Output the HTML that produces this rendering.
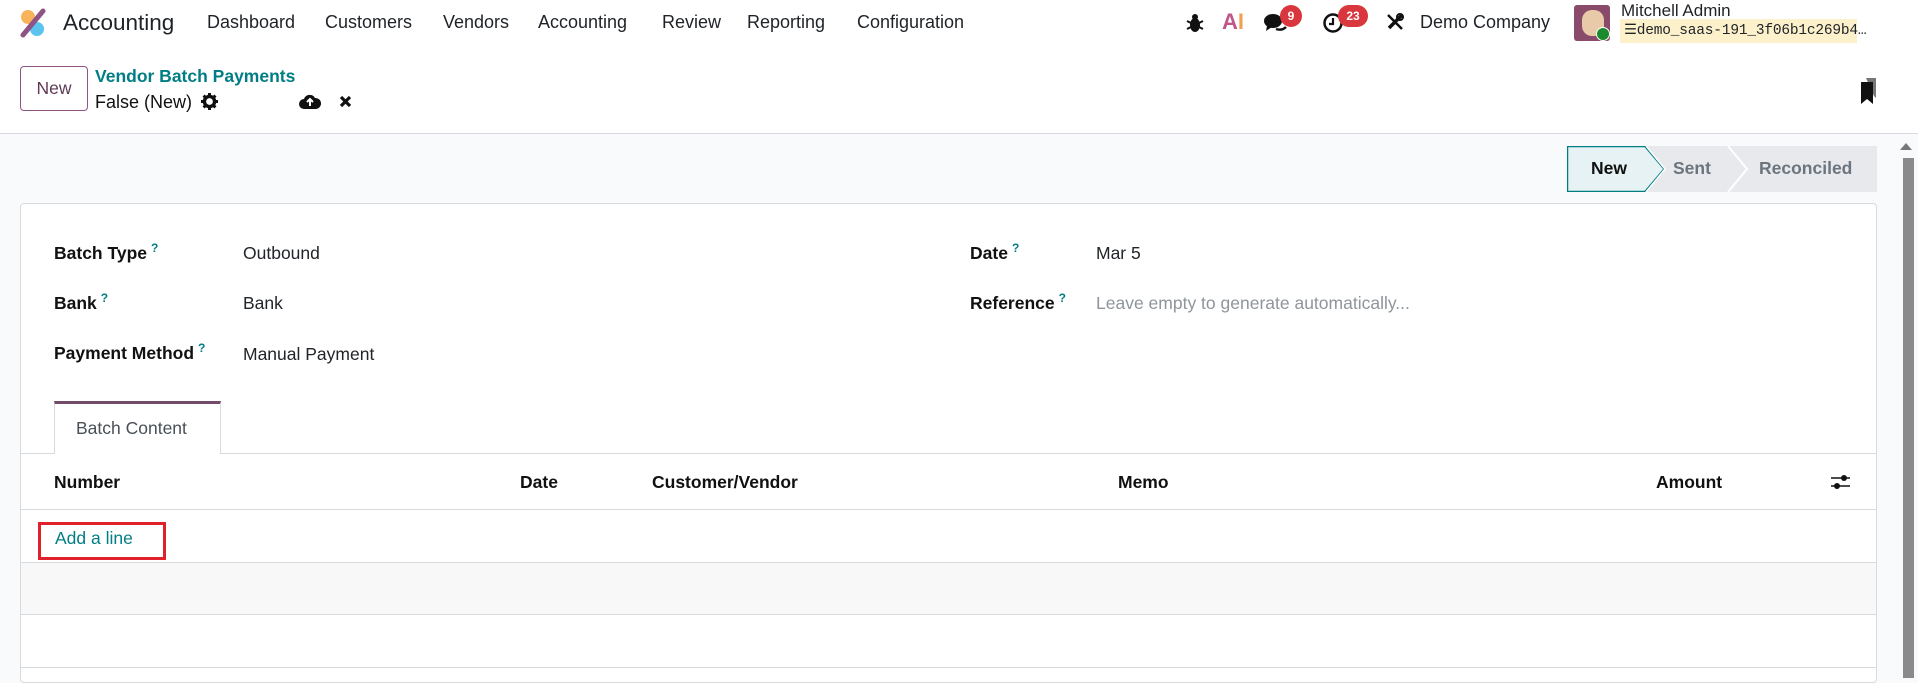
<!DOCTYPE html>
<html><head><meta charset="utf-8"><style>
*{box-sizing:border-box;margin:0;padding:0}
body{width:1918px;height:670px;overflow:hidden;font-family:"Liberation Sans",sans-serif;font-size:17.5px;color:#212529;background:#f9fafb;position:relative}
.a{position:absolute;white-space:nowrap}
.top{position:absolute;left:0;top:0;width:1918px;height:134px;background:#fff;border-bottom:1px solid #d8dadd}
.nav{font-size:18px;color:#1f2328;top:12px}
.lbl{font-weight:bold;color:#111}
.lbl sup{color:#017e84;font-size:12px;font-weight:bold;margin-left:4px}
.th{font-weight:bold;color:#111;top:472px}
.hl{position:absolute;left:20px;width:1857px;height:1px;background:#d8dadd}
</style></head><body>
<div class="top"></div>
<svg class="a" style="left:19px;top:8px" width="28" height="30" viewBox="0 0 28 30"><circle cx="9" cy="9" r="7" fill="#f9b45b"/><circle cx="18" cy="21" r="7" fill="#5bc4ee"/><line x1="4" y1="27" x2="24" y2="3" stroke="#8f5486" stroke-width="5" stroke-linecap="round"/></svg>
<div class="a" style="left:63px;top:10px;font-size:22.5px;color:#1f2328">Accounting</div>
<div class="a nav" style="left:207px">Dashboard</div>
<div class="a nav" style="left:325px">Customers</div>
<div class="a nav" style="left:443px">Vendors</div>
<div class="a nav" style="left:538px">Accounting</div>
<div class="a nav" style="left:662px">Review</div>
<div class="a nav" style="left:747px">Reporting</div>
<div class="a nav" style="left:857px">Configuration</div>
<svg class="a" style="left:1186px;top:13px" width="18" height="20" viewBox="0 0 18 20"><ellipse cx="9" cy="12" rx="5" ry="7" fill="#111"/><line x1="1" y1="8" x2="17" y2="16" stroke="#111" stroke-width="2"/><line x1="17" y1="8" x2="1" y2="16" stroke="#111" stroke-width="2"/><circle cx="9" cy="4" r="3" fill="#111"/></svg>
<div class="a" style="left:1222px;top:9px;font-size:22px;font-weight:bold;color:#c0568a">A<span style="color:#f0a050">I</span></div>
<svg class="a" style="left:1264px;top:12px" width="24" height="22" viewBox="0 0 24 22"><ellipse cx="9" cy="9" rx="9" ry="7" fill="#111"/><path d="M3 14 L2 19 L8 15Z" fill="#111"/><path d="M12 17 q6 2 10 -2" stroke="#111" stroke-width="2.5" fill="none"/></svg>
<div class="a" style="left:1280px;top:5px;width:22px;height:22px;border-radius:11px;background:#d9363e;color:#fff;font-size:12px;font-weight:bold;text-align:center;line-height:22px">9</div>
<svg class="a" style="left:1322px;top:12px" width="22" height="22" viewBox="0 0 22 22"><circle cx="11" cy="11" r="8.5" fill="none" stroke="#111" stroke-width="2.5"/><path d="M11 6v6h-4" stroke="#111" stroke-width="2.2" fill="none"/></svg>
<div class="a" style="left:1338px;top:5px;width:30px;height:22px;border-radius:11px;background:#d9363e;color:#fff;font-size:12px;font-weight:bold;text-align:center;line-height:22px">23</div>
<svg class="a" style="left:1385px;top:12px" width="20" height="20" viewBox="0 0 20 20"><path d="M3 3 L17 17" stroke="#111" stroke-width="2.5"/><path d="M17 3 L4 16" stroke="#111" stroke-width="3.5"/><circle cx="15" cy="5" r="3" fill="none" stroke="#111" stroke-width="2"/></svg>
<div class="a" style="left:1420px;top:12px;font-size:18px;color:#1f2328">Demo Company</div>
<div class="a" style="left:1574px;top:5px;width:36px;height:36px;background:#8a4a6a;border-radius:3px"></div>
<div class="a" style="left:1582px;top:10px;width:22px;height:26px;background:#e8c9a8;border-radius:10px"></div>
<div class="a" style="left:1596px;top:27px;width:14px;height:14px;border-radius:7px;background:#1b8a2c;border:1.5px solid #fff"></div>
<div class="a" style="left:1621px;top:1px;font-size:17px;color:#1f2328">Mitchell Admin</div>
<div class="a" style="left:1620px;top:19px;width:237px;height:24px;background:#fdf1cc"></div>
<div class="a" style="left:1624px;top:22px;font-family:'Liberation Mono',monospace;font-size:14.5px;color:#1f2328;letter-spacing:-0.2px">&#9776;demo_saas-191_3f06b1c269b4…</div>
<div class="a" style="left:20px;top:66px;width:68px;height:45px;border:1px solid #8f5486;border-radius:4px;text-align:center;line-height:43px;color:#5d3a56;font-size:17.5px">New</div>
<div class="a" style="left:95px;top:66px;font-weight:bold;color:#017e84;font-size:17.5px">Vendor Batch Payments</div>
<div class="a" style="left:95px;top:92px;font-size:18px;color:#111">False (New)</div>
<svg class="a" style="left:201px;top:93px" width="17" height="17" viewBox="0 0 20 20"><circle cx="10" cy="10" r="6" fill="none" stroke="#111" stroke-width="4"/><path d="M10 0v5M10 15v5M0 10h5M15 10h5M3 3l4 4M13 13l4 4M17 3l-4 4M3 17l4-4" stroke="#111" stroke-width="3.5"/></svg>
<svg class="a" style="left:299px;top:93px" width="22" height="16" viewBox="0 0 22 16"><path d="M5 16 a5 5 0 0 1 0-10 a6 6 0 0 1 11-1 a5 5 0 0 1 1 11Z" fill="#111"/><path d="M11 13V7M8 9l3-3 3 3" stroke="#fff" stroke-width="2" fill="none"/></svg>
<svg class="a" style="left:339px;top:95px" width="13" height="13" viewBox="0 0 13 13"><path d="M2 2L11 11M11 2L2 11" stroke="#111" stroke-width="3.2"/></svg>
<svg class="a" style="left:1860px;top:78px" width="18" height="26" viewBox="0 0 18 26"><path d="M6 0h10v20l-2-2" fill="#777"/><path d="M1 4h12v22l-6-5-6 5Z" fill="#111"/></svg>
<svg class="a" style="left:1567px;top:146px" width="310" height="46" viewBox="0 0 310 46"><rect x="0" y="0" width="310" height="46" fill="#e7e9ed"/><path d="M0.5 0.5H78L97 23L78 45.5H0.5Z" fill="#e6f2f3" stroke="#017e84" stroke-width="1.5"/><path d="M79 0L98 23L79 46" fill="none" stroke="#fff" stroke-width="1.5"/><path d="M161 0L180 23L161 46" fill="none" stroke="#fff" stroke-width="2"/></svg>
<div class="a" style="left:1591px;top:158px;font-weight:bold;color:#111">New</div>
<div class="a" style="left:1673px;top:158px;font-weight:bold;color:#6c757d">Sent</div>
<div class="a" style="left:1759px;top:158px;font-weight:bold;color:#6c757d">Reconciled</div>
<div class="a" style="left:20px;top:203px;width:1857px;height:480px;background:#fff;border:1px solid #d8dadd;border-radius:4px"></div>
<div class="a lbl" style="left:54px;top:241px">Batch Type<sup>?</sup></div>
<div class="a" style="left:243px;top:243px">Outbound</div>
<div class="a lbl" style="left:54px;top:291px">Bank<sup>?</sup></div>
<div class="a" style="left:243px;top:293px">Bank</div>
<div class="a lbl" style="left:54px;top:341px">Payment Method<sup>?</sup></div>
<div class="a" style="left:243px;top:344px">Manual Payment</div>
<div class="a lbl" style="left:970px;top:241px">Date<sup>?</sup></div>
<div class="a" style="left:1096px;top:243px">Mar 5</div>
<div class="a lbl" style="left:970px;top:291px">Reference<sup>?</sup></div>
<div class="a" style="left:1096px;top:293px;color:#8f959b">Leave empty to generate automatically...</div>
<div class="hl" style="top:453px"></div>
<div class="a" style="left:54px;top:401px;width:167px;height:53px;background:#fff;border:1px solid #d8dadd;border-top:3px solid #714b67;border-bottom:none"></div>
<div class="a" style="left:76px;top:418px;color:#495057">Batch Content</div>
<div class="a th" style="left:54px">Number</div>
<div class="a th" style="left:520px">Date</div>
<div class="a th" style="left:652px">Customer/Vendor</div>
<div class="a th" style="left:1118px">Memo</div>
<div class="a th" style="left:1656px">Amount</div>
<svg class="a" style="left:1830px;top:474px" width="22" height="16" viewBox="0 0 22 16"><path d="M1 4H20M1 12H20" stroke="#111" stroke-width="1.5"/><circle cx="14" cy="4" r="3" fill="#111"/><circle cx="7" cy="12" r="3" fill="#111"/></svg>
<div class="hl" style="top:509px"></div>
<div class="a" style="left:38px;top:522px;width:128px;height:38px;border:3px solid #e0202a"></div>
<div class="a" style="left:55px;top:528px;color:#017e84">Add a line</div>
<div class="a" style="left:20px;top:562px;width:1857px;height:53px;background:#f8f8f8;border:1px solid #d8dadd"></div>
<div class="hl" style="top:667px"></div>
<svg class="a" style="left:1898px;top:140px" width="16" height="12" viewBox="0 0 16 12"><path d="M2 10L8 3L14 10Z" fill="#777"/></svg>
<div class="a" style="left:1903px;top:158px;width:11px;height:520px;background:#8a8a8d"></div>
</body></html>
